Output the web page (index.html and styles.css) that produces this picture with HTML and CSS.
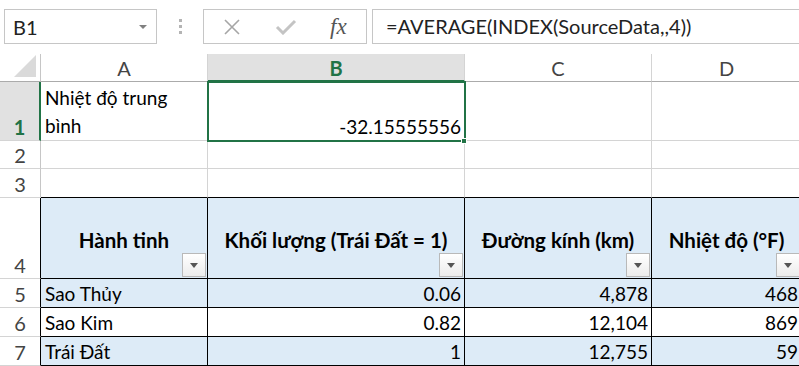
FILE: index.html
```html
<!DOCTYPE html>
<html lang="vi">
<head>
    <meta charset="UTF-8">
    <title>Nhiệt độ hành tinh</title>
    <link rel="stylesheet" href="styles.css">
</head>
<body>
    <!-- Formula bar -->
    <div class="formula-bar">
        <div class="name-box">
            <span>B1</span>
            <span class="name-arrow"></span>
        </div>
        <div class="grip"><i></i><i></i><i></i></div>
        <div class="fx-box">
            <svg class="icon-x" width="20" height="16" viewBox="0 0 20 16">
                <path d="M3 1 L17 15 M17 1 L3 15" stroke="#a6a6a6" stroke-width="1.6" fill="none"/>
            </svg>
            <svg class="icon-check" width="22" height="16" viewBox="0 0 22 16">
                <path d="M2 8 L8 14 L20 2" stroke="#c4c4c4" stroke-width="3" fill="none"/>
            </svg>
            <span class="fx">fx</span>
        </div>
        <div class="formula">=AVERAGE(INDEX(SourceData,,4))</div>
    </div>

    <!-- Sheet grid -->
    <div class="sheet">
        <div class="corner"><span class="corner-tri"></span></div>
        <div class="colhead">A</div>
        <div class="colhead active">B</div>
        <div class="colhead">C</div>
        <div class="colhead">D</div>

        <div class="rowhead active">1</div>
        <div class="cell wrap">Nhiệt độ trung bình</div>
        <div class="cell num">-32.15555556</div>
        <div class="cell"></div>
        <div class="cell"></div>

        <div class="rowhead">2</div>
        <div class="cell"></div>
        <div class="cell"></div>
        <div class="cell"></div>
        <div class="cell"></div>

        <div class="rowhead">3</div>
        <div class="cell above"></div>
        <div class="cell above"></div>
        <div class="cell above"></div>
        <div class="cell above"></div>

        <div class="rowhead tblrow">4</div>
        <div class="cell tbl hdr">Hành tinh<span class="filter"></span></div>
        <div class="cell tbl hdr">Khối lượng (Trái Đất = 1)<span class="filter"></span></div>
        <div class="cell tbl hdr">Đường kính (km)<span class="filter"></span></div>
        <div class="cell tbl hdr">Nhiệt độ (°F)<span class="filter"></span></div>

        <div class="rowhead tblrow">5</div>
        <div class="cell tbl band">Sao Thủy</div>
        <div class="cell tbl band num">0.06</div>
        <div class="cell tbl band num">4,878</div>
        <div class="cell tbl band num">468</div>

        <div class="rowhead tblrow">6</div>
        <div class="cell tbl">Sao Kim</div>
        <div class="cell tbl num">0.82</div>
        <div class="cell tbl num">12,104</div>
        <div class="cell tbl num">869</div>

        <div class="rowhead tblrow">7</div>
        <div class="cell tbl band">Trái Đất</div>
        <div class="cell tbl band num">1</div>
        <div class="cell tbl band num">12,755</div>
        <div class="cell tbl band num">59</div>

        <!-- Active cell outline over B1 -->
        <div class="selection"></div>
        <div class="fill-handle"></div>
    </div>
</body>
</html>
```

FILE: styles.css
```css
/* Page */
body {
    margin: 0;
    background: #fff;
    font-family: Lato, "Liberation Sans", sans-serif;
    font-size: 19px;
    color: #000;
    overflow: hidden;
}

/* Formula bar across the top */
.formula-bar {
    display: flex;
    align-items: flex-start;
    height: 54px;
    padding-top: 9px;
    box-sizing: border-box;
}

.name-box {
    box-sizing: border-box;
    width: 153px;
    height: 35px;
    margin-left: 4px;
    border: 1px solid #c6c6c6;
    display: flex;
    align-items: center;
    justify-content: space-between;
    padding: 0 9px 0 8px;
    color: #222;
    font-size: 20px;
}

.name-arrow {
    width: 0;
    height: 0;
    border-left: 4px solid transparent;
    border-right: 4px solid transparent;
    border-top: 4px solid #808080;
}

.grip {
    width: 46px;
    height: 35px;
    display: flex;
    flex-direction: column;
    align-items: center;
    justify-content: center;
    gap: 3px;
}

.grip i {
    width: 3px;
    height: 3px;
    background: #b4b4b4;
}

.fx-box {
    box-sizing: border-box;
    width: 164px;
    height: 35px;
    border: 1px solid #c6c6c6;
    display: flex;
    align-items: center;
    padding-left: 18px;
}

.icon-check {
    margin-left: 33px;
}

.fx {
    margin-left: 33px;
    font-family: "Liberation Serif", serif;
    font-style: italic;
    font-size: 23px;
    color: #555;
}

.formula {
    box-sizing: border-box;
    flex: 1;
    height: 35px;
    margin-left: 5px;
    margin-right: -2px;
    border: 1px solid #c6c6c6;
    padding-left: 13px;
    line-height: 32px;
    font-size: 20px;
    color: #222;
}

/* Worksheet grid */
.sheet {
    position: relative;
    display: grid;
    grid-template-columns: 41px 167px 257px 187px 150px;
    grid-template-rows: 28px 59px 28px 29px 81px 29px 29px 29px;
}

.sheet > div {
    box-sizing: border-box;
}

.corner {
    position: relative;
    border-right: 1px solid #c6c6c6;
    border-bottom: 1px solid #ababab;
}

.corner-tri {
    position: absolute;
    right: 4px;
    bottom: 4px;
    width: 0;
    height: 0;
    border-left: 22px solid transparent;
    border-bottom: 22px solid #dadada;
}

.colhead {
    border-right: 1px solid #d4d4d4;
    border-bottom: 1px solid #ababab;
    text-align: center;
    line-height: 28px;
    color: #444;
    font-size: 20px;
}

.colhead.active {
    background: #e1e1e1;
    color: #217346;
    font-weight: bold;
    border-bottom: 2px solid #217346;
}

.rowhead {
    border-right: 1px solid #c6c6c6;
    border-bottom: 1px solid #d4d4d4;
    display: flex;
    align-items: flex-end;
    justify-content: center;
    color: #444;
    line-height: 26px;
    font-size: 20px;
}

.rowhead.active {
    background: #e1e1e1;
    color: #217346;
    font-weight: bold;
    border-right: 2px solid #217346;
}

.rowhead.tblrow {
    border-right: 1px solid #000;
}

.cell {
    position: relative;
    border-right: 1px solid #d4d4d4;
    border-bottom: 1px solid #d4d4d4;
    padding: 0 4px;
    display: flex;
    align-items: flex-end;
    line-height: 27px;
    white-space: nowrap;
}

.cell.wrap {
    white-space: normal;
    line-height: 28px;
}

.cell.num {
    justify-content: flex-end;
    padding-right: 3px;
}

.cell.above {
    border-bottom: 1px solid #000;
}

/* Table area with black borders */
.cell.tbl {
    border-right: 1px solid #000;
    border-bottom: 1px solid #000;
}

.cell.band,
.cell.hdr {
    background: #ddebf7;
}

.cell.hdr {
    font-weight: bold;
    font-size: 20.5px;
    align-items: center;
    justify-content: center;
    padding-top: 4px;
}

.filter {
    position: absolute;
    right: 1px;
    bottom: 1px;
    width: 24px;
    height: 24px;
    box-sizing: border-box;
    border: 1px solid #b9b9b9;
    background: linear-gradient(#ffffff, #ececec);
}

.filter::after {
    content: "";
    position: absolute;
    left: 7px;
    top: 9px;
    border-left: 4px solid transparent;
    border-right: 4px solid transparent;
    border-top: 5px solid #555;
}

/* Active cell overlay */
.selection {
    position: absolute;
    left: 207px;
    top: 27px;
    width: 259px;
    height: 61px;
    border: 2px solid #217346;
}

.fill-handle {
    position: absolute;
    left: 461px;
    top: 84px;
    width: 6px;
    height: 6px;
    background: #217346;
    border: 1px solid #fff;
}
```
